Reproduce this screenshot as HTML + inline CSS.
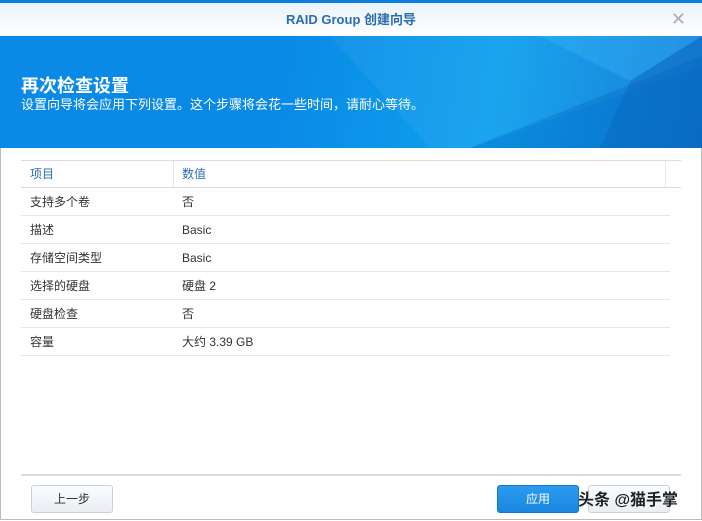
<!DOCTYPE html>
<html><head><meta charset="utf-8"><style>
body{margin:0;width:702px;height:521px;overflow:hidden;background:#fff;font-family:"Liberation Sans","Noto Sans CJK SC",sans-serif;position:relative}
.top{position:absolute;left:0;top:0;width:702px;height:3px;background:#0a7ed8}
.tb{position:absolute;left:0;top:3px;width:702px;height:33px;background:linear-gradient(#e9f2fa,#fff);text-align:center;line-height:33px;color:#2a6db3;font-size:13px;font-weight:bold}
.x{position:absolute;right:16px;top:0;color:#aab;font-size:18px;font-weight:normal}
.bn{position:absolute;left:0;top:36px;width:702px;height:112px;background:linear-gradient(100deg,#0a8ae6 40%,#0ea0ee 70%,#0a78d2 100%);overflow:hidden}
.bn h1{position:absolute;left:21px;top:36px;margin:0;color:#fff;font-size:18px}
.bn p{position:absolute;left:21px;top:58px;margin:0;color:#fff;font-size:13px}
.hd{position:absolute;left:21px;top:160px;width:660px;height:26px;border-top:1px solid #d8dde5;border-bottom:1px solid #d8dde5;font-size:12px;color:#2a6db3;line-height:26px}
.hd span{position:absolute;top:0}
.vl{position:absolute;top:0;width:1px;height:26px;background:#e4e8ee}
table{position:absolute;left:21px;top:188px;border-collapse:collapse;width:649px;font-size:12px}
td{height:27px;border-bottom:1px solid #e4e8ee;padding:0 0 0 9px;color:#333}
.bl{position:absolute;left:21px;top:474px;width:660px;height:2px;background:#ddd}
.btn{position:absolute;top:485px;height:26px;width:80px;border:1px solid #c8d0da;border-radius:3px;background:linear-gradient(#fafcfe,#eaeef3);font-size:12px;text-align:center;line-height:26px;color:#333}
.wm{position:absolute;left:578px;top:486px;font-size:16px;color:#222;font-weight:bold}
.frame{position:absolute;left:0;top:0;width:700px;height:519px;border:1px solid #bbb;border-top:none}
</style></head><body>
<div class="frame"></div>
<div class="top"></div>
<div class="tb">RAID Group 创建向导<span class="x">✕</span></div>
<div class="bn">
<svg width="702" height="112" style="position:absolute;left:0;top:0">
<polygon points="330,0 702,0 702,30 470,112 430,112" fill="#fff" opacity="0.05"/>
<polygon points="470,112 702,20 702,112" fill="#0866c0" opacity="0.35"/>
<polygon points="630,45 702,0 702,112 600,112" fill="#0a5cb5" opacity="0.3"/>
<polygon points="540,0 702,0 630,45" fill="#4cc2ff" opacity="0.25"/>
</svg>
<h1>再次检查设置</h1>
<p>设置向导将会应用下列设置。这个步骤将会花一些时间，请耐心等待。</p>
</div>
<div class="hd"><span style="left:9px">项目</span><div class="vl" style="left:152px"></div><span style="left:161px">数值</span><div class="vl" style="left:644px"></div></div>
<table>
<tr><td style="width:143px">支持多个卷</td><td>否</td></tr>
<tr><td>描述</td><td>Basic</td></tr>
<tr><td>存储空间类型</td><td>Basic</td></tr>
<tr><td>选择的硬盘</td><td>硬盘 2</td></tr>
<tr><td>硬盘检查</td><td>否</td></tr>
<tr><td>容量</td><td>大约 3.39 GB</td></tr>
</table>
<div class="bl"></div>
<div class="btn" style="left:31px">上一步</div>
<div class="btn" style="left:497px;background:linear-gradient(#2b9cf0,#1a86e0);border-color:#1677c8;color:#fff">应用</div>
<div class="btn" style="left:588px"></div>
<div class="wm">头条 @猫手掌</div>
</body></html>
